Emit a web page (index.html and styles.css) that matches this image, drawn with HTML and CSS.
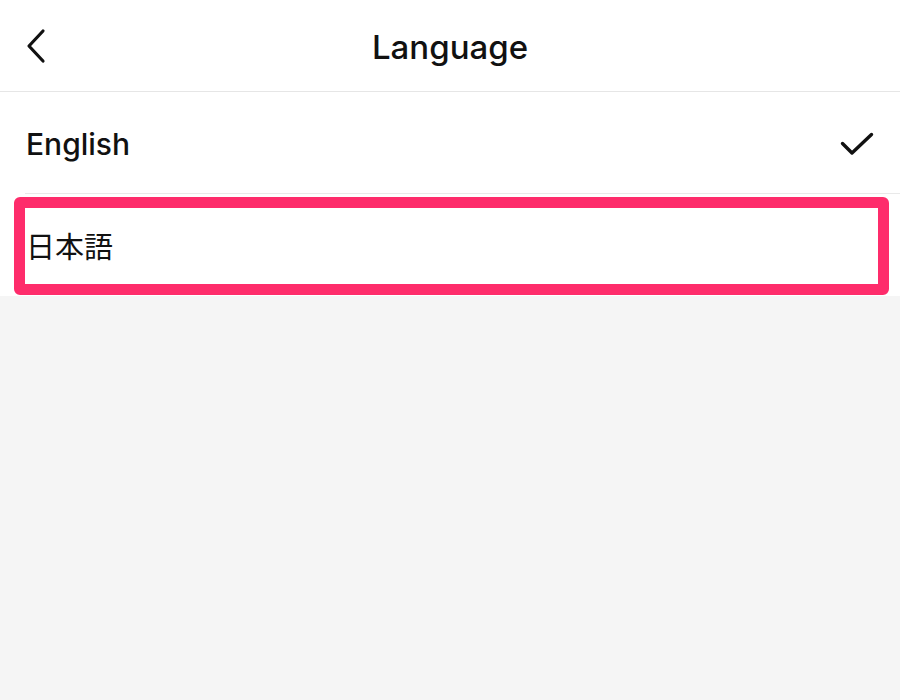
FILE: index.html
```html
<!DOCTYPE html>
<html lang="en">
<head>
<meta charset="utf-8">
<link rel="stylesheet" href="styles.css">
</head>
<body>
<div class="page">
  <header class="nav">
    <span class="back">
      <svg width="20" height="36" viewBox="0 0 20 36"><path d="M17 3 L3 18 L17 33" fill="none" stroke="#111" stroke-width="3.2" stroke-linecap="round" stroke-linejoin="round"/></svg>
    </span>
    <h1 class="title">Language</h1>
  </header>
  <ul class="list">
    <li class="row">
      <span class="label">English</span>
      <svg class="check" width="34" height="24" viewBox="0 0 34 24"><path d="M2.5 11.5 L12 21 L31.5 2.5" fill="none" stroke="#111" stroke-width="3.4" stroke-linecap="round" stroke-linejoin="round"/></svg>
    </li>
    <li class="row highlighted">
      <span class="label jp">日本語</span>
      <span class="marker"></span>
    </li>
  </ul>
</div>
</body>
</html>
```
FILE: styles.css
```css
html, body {
  margin: 0;
  padding: 0;
  background: #f5f5f5;
  font-family: Inter, "Noto Sans", "Noto Sans CJK JP", sans-serif;
  color: #111;
}
.page {
  width: 900px;
  height: 700px;
  position: relative;
}
.nav {
  height: 91px;
  background: #fff;
  border-bottom: 1px solid #e6e6e6;
  display: flex;
  align-items: center;
  justify-content: center;
  position: relative;
}
.back {
  position: absolute;
  left: 26px;
  top: 28px;
  display: flex;
}
.title {
  margin: 0;
  font-size: 33px;
  font-weight: 500;
  letter-spacing: 0;
  padding-top: 3px;
}
.list {
  list-style: none;
  margin: 0;
  padding: 0 0 0 25px;
  background: #fff;
}
.row {
  height: 101px;
  display: flex;
  align-items: center;
  justify-content: space-between;
  padding-right: 26px;
  border-bottom: 1px solid #e9e9e9;
  position: relative;
}
.row:last-child {
  border-bottom: none;
  height: 102px;
}
.label {
  font-size: 30px;
  font-weight: 500;
  padding-left: 1px;
  padding-top: 2px;
}
.label.jp {
  font-family: "Noto Sans CJK JP", sans-serif;
  font-weight: 400;
  font-size: 29px;
  padding-left: 1px;
  padding-top: 0;
}
.check {
  margin-top: 2px;
}
.marker {
  position: absolute;
  left: -11px;
  top: 3px;
  width: 853px;
  height: 76px;
  border: 11px solid #fe2c6b;
  border-radius: 6px;
}
```
